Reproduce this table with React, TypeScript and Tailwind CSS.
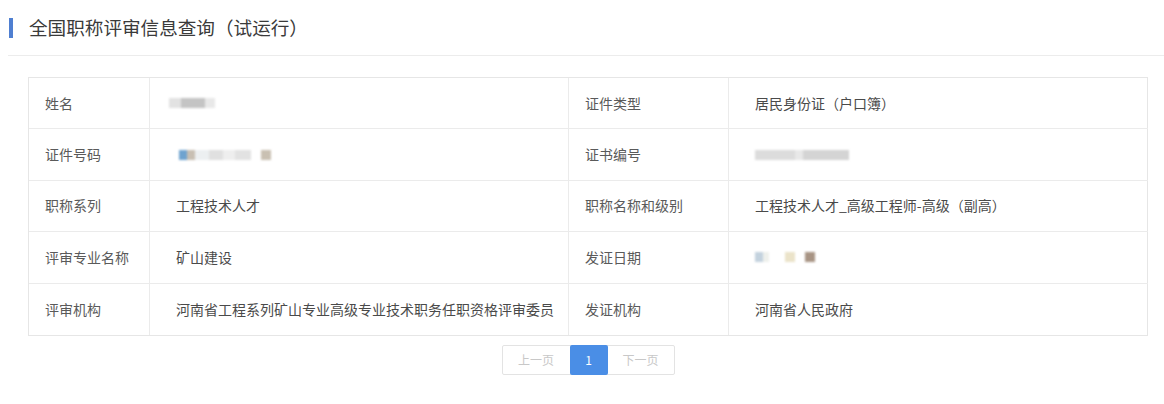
import React from "react";

const font = { fontFamily: '"Noto Sans CJK SC", "Noto Sans", sans-serif' };

function Blur({ blocks }: { blocks: { w: number; c: string; ml?: number }[] }) {
  return (
    <div className="flex items-center blur-[1px]">
      {blocks.map((b, i) => (
        <div key={i} className="h-[10px]" style={{ width: b.w, background: b.c, marginLeft: b.ml ?? 0 }} />
      ))}
    </div>
  );
}

type Row = { l1: string; v1: React.ReactNode; l2: string; v2: React.ReactNode };

export default function App() {
  const rows: Row[] = [
    {
      l1: "姓名",
      v1: <div className="-ml-[7px]"><Blur blocks={[{ w: 12, c: "#e2e2e2" }, { w: 24, c: "#c4c4c4" }, { w: 10, c: "#e8e8e8" }]} /></div>,
      l2: "证件类型",
      v2: "居民身份证（户口簿）",
    },
    {
      l1: "证件号码",
      v1: (
        <div className="ml-[3px]">
          <Blur
            blocks={[
              { w: 8, c: "#6fa3cf" },
              { w: 8, c: "#c8bfb3" },
              { w: 14, c: "#eceff1" },
              { w: 14, c: "#e0e0e0" },
              { w: 12, c: "#eeeeee" },
              { w: 16, c: "#e2e2e2" },
              { w: 10, c: "#c9c0b2", ml: 10 },
            ]}
          />
        </div>
      ),
      l2: "证书编号",
      v2: <Blur blocks={[{ w: 40, c: "#dcdcdc" }, { w: 8, c: "#e8e8e8" }, { w: 46, c: "#d4d4d4" }]} />,
    },
    { l1: "职称系列", v1: "工程技术人才", l2: "职称名称和级别", v2: "工程技术人才_高级工程师-高级（副高）" },
    {
      l1: "评审专业名称",
      v1: "矿山建设",
      l2: "发证日期",
      v2: (
        <Blur
          blocks={[
            { w: 8, c: "#c3d2de" },
            { w: 6, c: "#eef0ec" },
            { w: 10, c: "#ebe3c9", ml: 16 },
            { w: 10, c: "#a89484", ml: 10 },
          ]}
        />
      ),
    },
    { l1: "评审机构", v1: "河南省工程系列矿山专业高级专业技术职务任职资格评审委员", l2: "发证机构", v2: "河南省人民政府" },
  ];

  return (
    <div className="w-[1164px] h-[404px] bg-white overflow-hidden" style={font}>
      <div className="ml-[8px] h-[56px] border-b border-[#ececec] flex items-center">
        <div className="ml-px w-[4px] h-[20px] bg-[#4f7fd1]" />
        <div className="ml-[16px] text-[18.6px] text-[#3a3a3a] leading-none">全国职称评审信息查询（试运行）</div>
      </div>
      <div className="ml-[28px] mt-[21px] w-[1120px] border border-[#e6e6e6] grid grid-cols-[121px_419px_160px_419px] text-[14px]">
        {rows.map((r, i) => {
          const b = i < rows.length - 1 ? "border-b border-[#ebebeb]" : "";
          return (
            <React.Fragment key={i}>
              <div className={`h-[51.4px] flex items-center pl-[16px] text-[#5a5a5a] border-r border-[#ebebeb] ${b}`}>{r.l1}</div>
              <div className={`h-[51.4px] flex items-center pl-[26px] text-[#4a4a4a] border-r border-[#ebebeb] ${b}`}>{r.v1}</div>
              <div className={`h-[51.4px] flex items-center pl-[16px] text-[#5a5a5a] border-r border-[#ebebeb] ${b}`}>{r.l2}</div>
              <div className={`h-[51.4px] flex items-center pl-[26px] text-[#4a4a4a] ${b}`}>{r.v2}</div>
            </React.Fragment>
          );
        })}
      </div>
      <div className="w-[1120px] ml-[28px] mt-[9px] flex justify-center">
        <div className="flex h-[30px] border border-[#e3e3e3] rounded-[2px] text-[12px]">
          <div className="w-[67px] flex items-center justify-center text-[#c8c8c8]">上一页</div>
          <div className="w-[38px] flex items-center justify-center bg-[#4a8ee6] text-white rounded-[2px] -my-px">1</div>
          <div className="w-[66px] flex items-center justify-center text-[#c8c8c8]">下一页</div>
        </div>
      </div>
    </div>
  );
}
